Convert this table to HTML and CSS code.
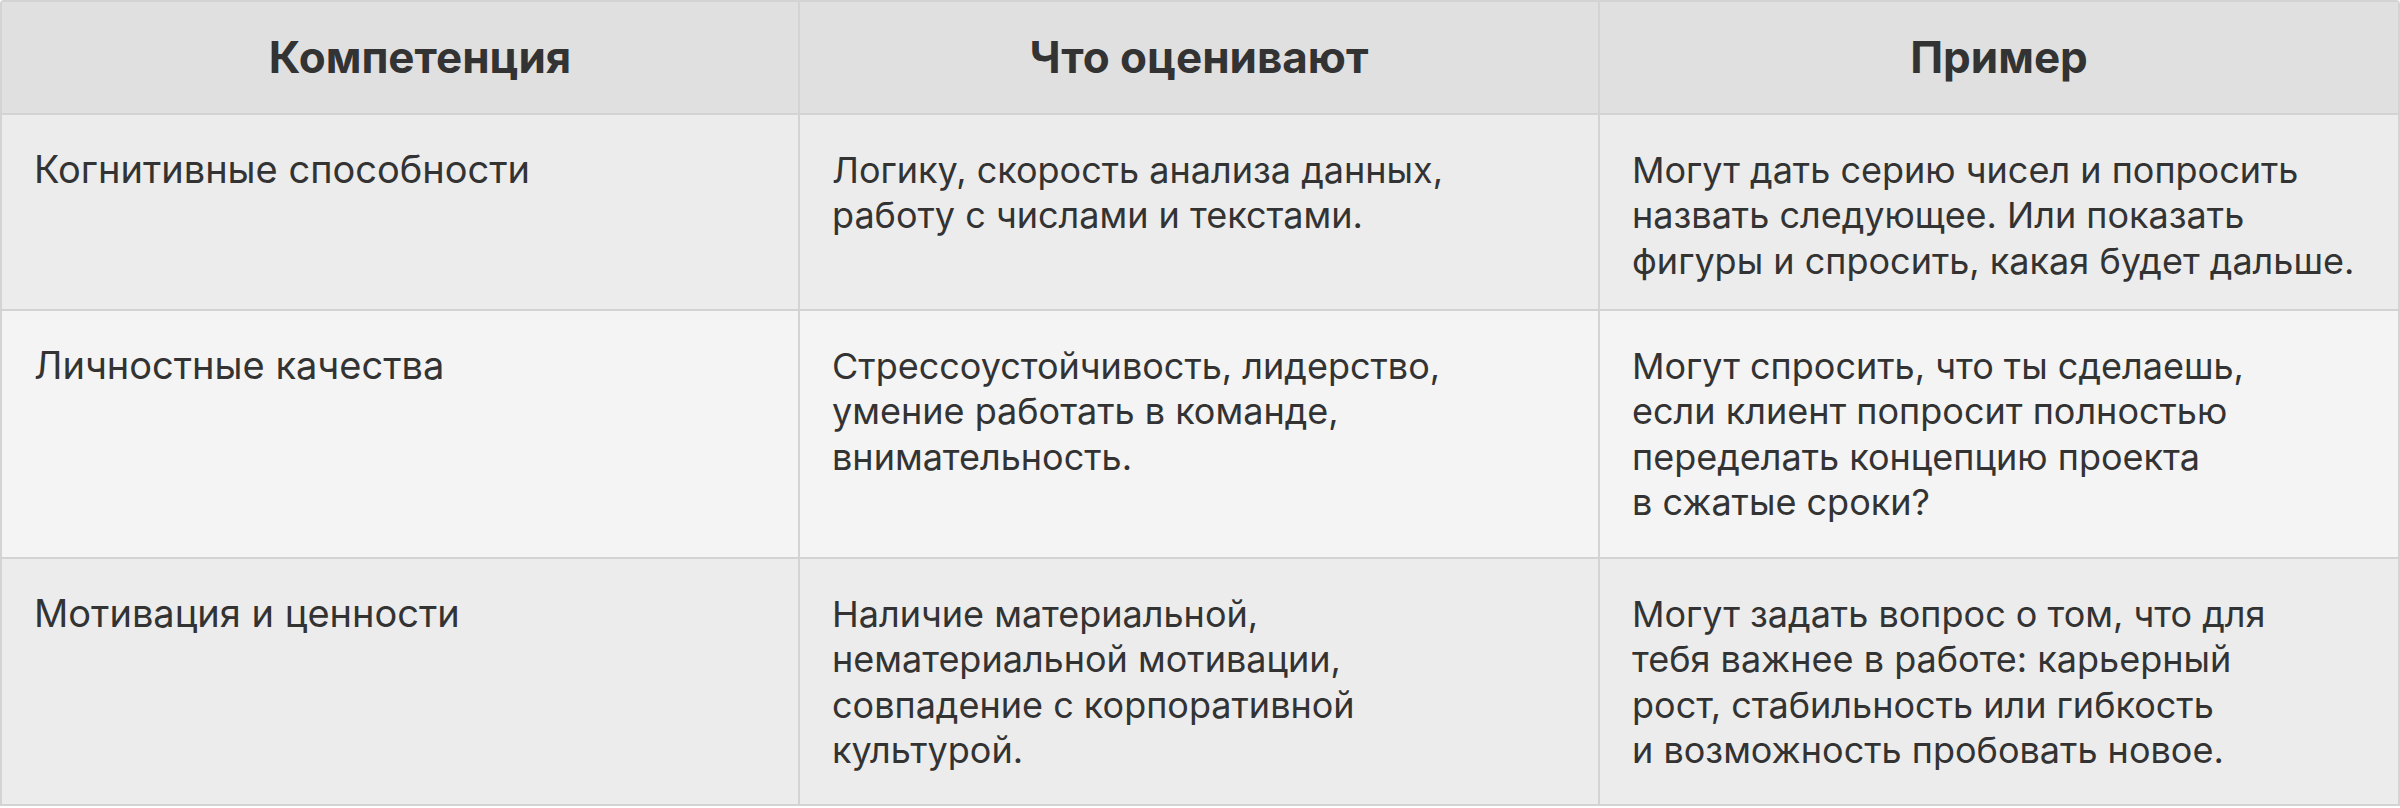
FILE: index.html
```html
<!DOCTYPE html>
<html lang="ru">
<head>
<meta charset="utf-8">
<title>Компетенции</title>
<link rel="stylesheet" href="styles.css">
</head>
<body>
<div class="table">
  <div class="cell head first">Компетенция</div>
  <div class="cell head">Что оценивают</div>
  <div class="cell head">Пример</div>

  <div class="cell r1 name">Когнитивные способности</div>
  <div class="cell r1">Логику, скорость анализа данных,<br>работу с&nbsp;числами и&nbsp;текстами.</div>
  <div class="cell r1">Могут дать серию чисел и&nbsp;попросить<br>назвать следующее. Или показать<br>фигуры и&nbsp;спросить, какая будет дальше.</div>

  <div class="cell r2 name">Личностные качества</div>
  <div class="cell r2">Стрессоустойчивость, лидерство,<br>умение работать в&nbsp;команде,<br>внимательность.</div>
  <div class="cell r2">Могут спросить, что ты сделаешь,<br>если клиент попросит полностью<br>переделать концепцию проекта<br>в&nbsp;сжатые сроки?</div>

  <div class="cell r3 name">Мотивация и ценности</div>
  <div class="cell r3">Наличие материальной,<br>нематериальной мотивации,<br>совпадение с&nbsp;корпоративной<br>культурой.</div>
  <div class="cell r3">Могут задать вопрос о&nbsp;том, что для<br>тебя важнее в&nbsp;работе: карьерный<br>рост, стабильность или гибкость<br>и&nbsp;возможность пробовать новое.</div>
</div>
</body>
</html>
```
FILE: styles.css
```css
html, body {
  margin: 0;
  padding: 0;
  background: #ffffff;
}

body {
  font-family: Inter, "Noto Sans", sans-serif;
  color: #333333;
}

.table {
  display: grid;
  grid-template-columns: 798px 800px 800px;
  grid-template-rows: 113px 196px 248px 247px;
  width: 2400px;
  box-sizing: border-box;
  border-left: 2px solid #d3d3d3;
  border-top: 2px solid #d3d3d3;
  border-radius: 4px 4px 0 0;
  overflow: hidden;
}

.cell {
  box-sizing: border-box;
  border-right: 2px solid #d3d3d3;
  border-bottom: 2px solid #d3d3d3;
  padding: 33px 32px 0 32px;
  font-size: 36px;
  line-height: 45.4px;
  font-weight: 400;
}

.cell.name {
  font-size: 38px;
  padding-top: 32px;
}

.head {
  background: #e0e0e0;
  display: flex;
  align-items: center;
  justify-content: center;
  padding: 0 32px;
  font-size: 44px;
  font-weight: 700;
  line-height: 1.2;
}

.head.first {
  padding-left: 72px;
}

.r1, .r3 {
  background: #ececec;
}

.r2 {
  background: #f4f4f4;
}
```
